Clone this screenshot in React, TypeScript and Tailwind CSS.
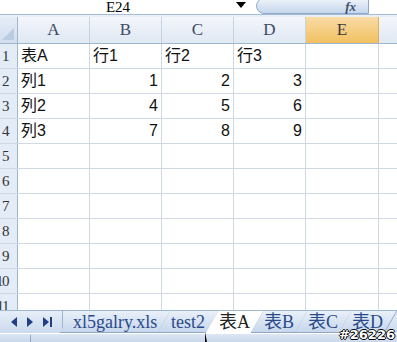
import React from "react";

const cols = ["A", "B", "C", "D", "E"];
const rows: (string | number)[][] = [
  ["表A", "行1", "行2", "行3", ""],
  ["列1", 1, 2, 3, ""],
  ["列2", 4, 5, 6, ""],
  ["列3", 7, 8, 9, ""],
];
const tabs = ["xl5galry.xls", "test2", "表A", "表B", "表C", "表D"];

const grid = "grid grid-cols-[18px_72px_72px_72px_72px_73px_1fr]";
const cellFont = { fontFamily: '"Liberation Sans", "Noto Sans CJK TC", sans-serif' };
const serif = { fontFamily: '"Liberation Serif", "Noto Sans CJK TC", serif' };

export default function App() {
  return (
    <div className="relative w-[397px] h-[342px] overflow-hidden bg-white select-none">
      {/* formula bar */}
      <div className="flex h-[15px] items-start border-b border-[#a7bcd8] bg-white">
        <div className="w-[236px] text-center text-[15px] leading-[14px] text-black" style={serif}>
          E24
        </div>
        <div className="mt-[2px] h-0 w-0 border-x-[5px] border-t-[6px] border-x-transparent border-t-black" />
        <div className="ml-[10px] -mt-[2px] flex h-[16px] w-[113px] items-center justify-end rounded-l-[10px] border border-[#8fa9cc] bg-gradient-to-b from-[#eef3fa] to-[#c5d6ec] pr-[12px]">
          <span className="text-[13px] font-bold italic leading-none text-[#3d4f6e]" style={serif}>fx</span>
        </div>
      </div>
      <div className="h-[2px] bg-[#e9eff7]" />

      {/* column header */}
      <div className={`${grid} h-[27px] border-b border-[#9eb6ce]`}>
        <div className="relative border-r border-[#9eb6ce] bg-gradient-to-b from-[#e4ecf7] to-[#d2deee]">
          <div className="absolute bottom-[3px] right-[3px] h-0 w-0 border-b-[12px] border-l-[12px] border-b-[#b8cce4] border-l-transparent" />
        </div>
        {cols.map((c) => (
          <div
            key={c}
            className={`flex items-center justify-center border-r text-[17px] ${
              c === "E"
                ? "border-[#e0b060] bg-gradient-to-b from-[#f9dba4] to-[#f1c15f] text-[#3a3a3a]"
                : "border-[#c5d2e3] bg-gradient-to-b from-[#f3f6fb] to-[#e0e8f3] text-[#3b4b66]"
            }`}
            style={serif}
          >
            {c}
          </div>
        ))}
        <div className="bg-gradient-to-b from-[#f3f6fb] to-[#e0e8f3]" />
      </div>

      {/* rows */}
      {Array.from({ length: 11 }, (_, i) => {
        const data = rows[i];
        return (
          <div key={i} className={`${grid} h-[25px] border-b border-[#d0d7e5]`}>
            <div
              className="flex items-center justify-end border-r border-[#9eb6ce] bg-[#e4ecf7] pr-[9px] text-[15px] tracking-[-1.5px] text-[#333]"
              style={serif}
            >
              {i + 1}
            </div>
            {cols.map((c, j) => {
              const v = data ? data[j] : "";
              const num = typeof v === "number";
              return (
                <div
                  key={c}
                  className={`flex items-center border-r border-[#d0d7e5] px-[3px] text-[16px] text-[#111] ${num ? "justify-end" : ""}`}
                  style={cellFont}
                >
                  {v}
                </div>
              );
            })}
            <div />
          </div>
        );
      })}

      {/* sheet tabs */}
      <div className="absolute left-0 top-[310px] flex h-[23px] w-full items-center border-t border-[#9eb6ce] bg-gradient-to-b from-[#e6eef8] to-[#cbdaee]">
        <div className="flex w-[62px] items-center gap-[10px] pl-[11px]">
          <div className="h-0 w-0 border-y-[5px] border-r-[6px] border-y-transparent border-r-[#1f3f7f]" />
          <div className="h-0 w-0 border-y-[5px] border-l-[6px] border-y-transparent border-l-[#1f3f7f]" />
          <div className="flex items-center">
            <div className="h-0 w-0 border-y-[5px] border-l-[6px] border-y-transparent border-l-[#1f3f7f]" />
            <div className="ml-[1px] h-[10px] w-[2px] bg-[#1f3f7f]" />
          </div>
        </div>
        <div className="h-full w-px bg-[#9eb6ce]" />
        <div className="flex h-full items-stretch pl-[4px]">
          {tabs.map((t) => {
            const active = t === "表A";
            return (
              <div
                key={t}
                className={`-ml-[1px] flex items-center border-b border-r border-[#8fa6c5] px-[5px] text-[18px] leading-none -skew-x-[30deg] ${
                  active ? "border-b-white bg-white text-[#222]" : "bg-gradient-to-b from-[#e9f0f9] to-[#c7d7ec] text-[#2a4a8a]"
                }`}
              >
                <span className="skew-x-[30deg] px-[2px]" style={serif}>{t}</span>
              </div>
            );
          })}
        </div>
      </div>

      {/* status bar */}
      <div className="absolute left-0 top-[333px] flex h-[9px] w-full items-end border-t border-white bg-gradient-to-b from-[#dde7f4] to-[#c9d8ec]">
        <div className="ml-[30px] h-[7px] w-px bg-[#8fa6c5]" />
      </div>
      <div className="absolute left-[205px] top-[332px] h-0 w-0 border-l-[2px] border-t-[10px] border-l-black border-t-transparent" />

      <div
        className="absolute bottom-[1px] right-[2px] text-[13px] font-bold leading-none text-white"
        style={{ fontFamily: '"DejaVu Sans", sans-serif', textShadow: "1px 0 #000, -1px 0 #000, 0 1px #000, 0 -1px #000" }}
      >
        #26226
      </div>
    </div>
  );
}
